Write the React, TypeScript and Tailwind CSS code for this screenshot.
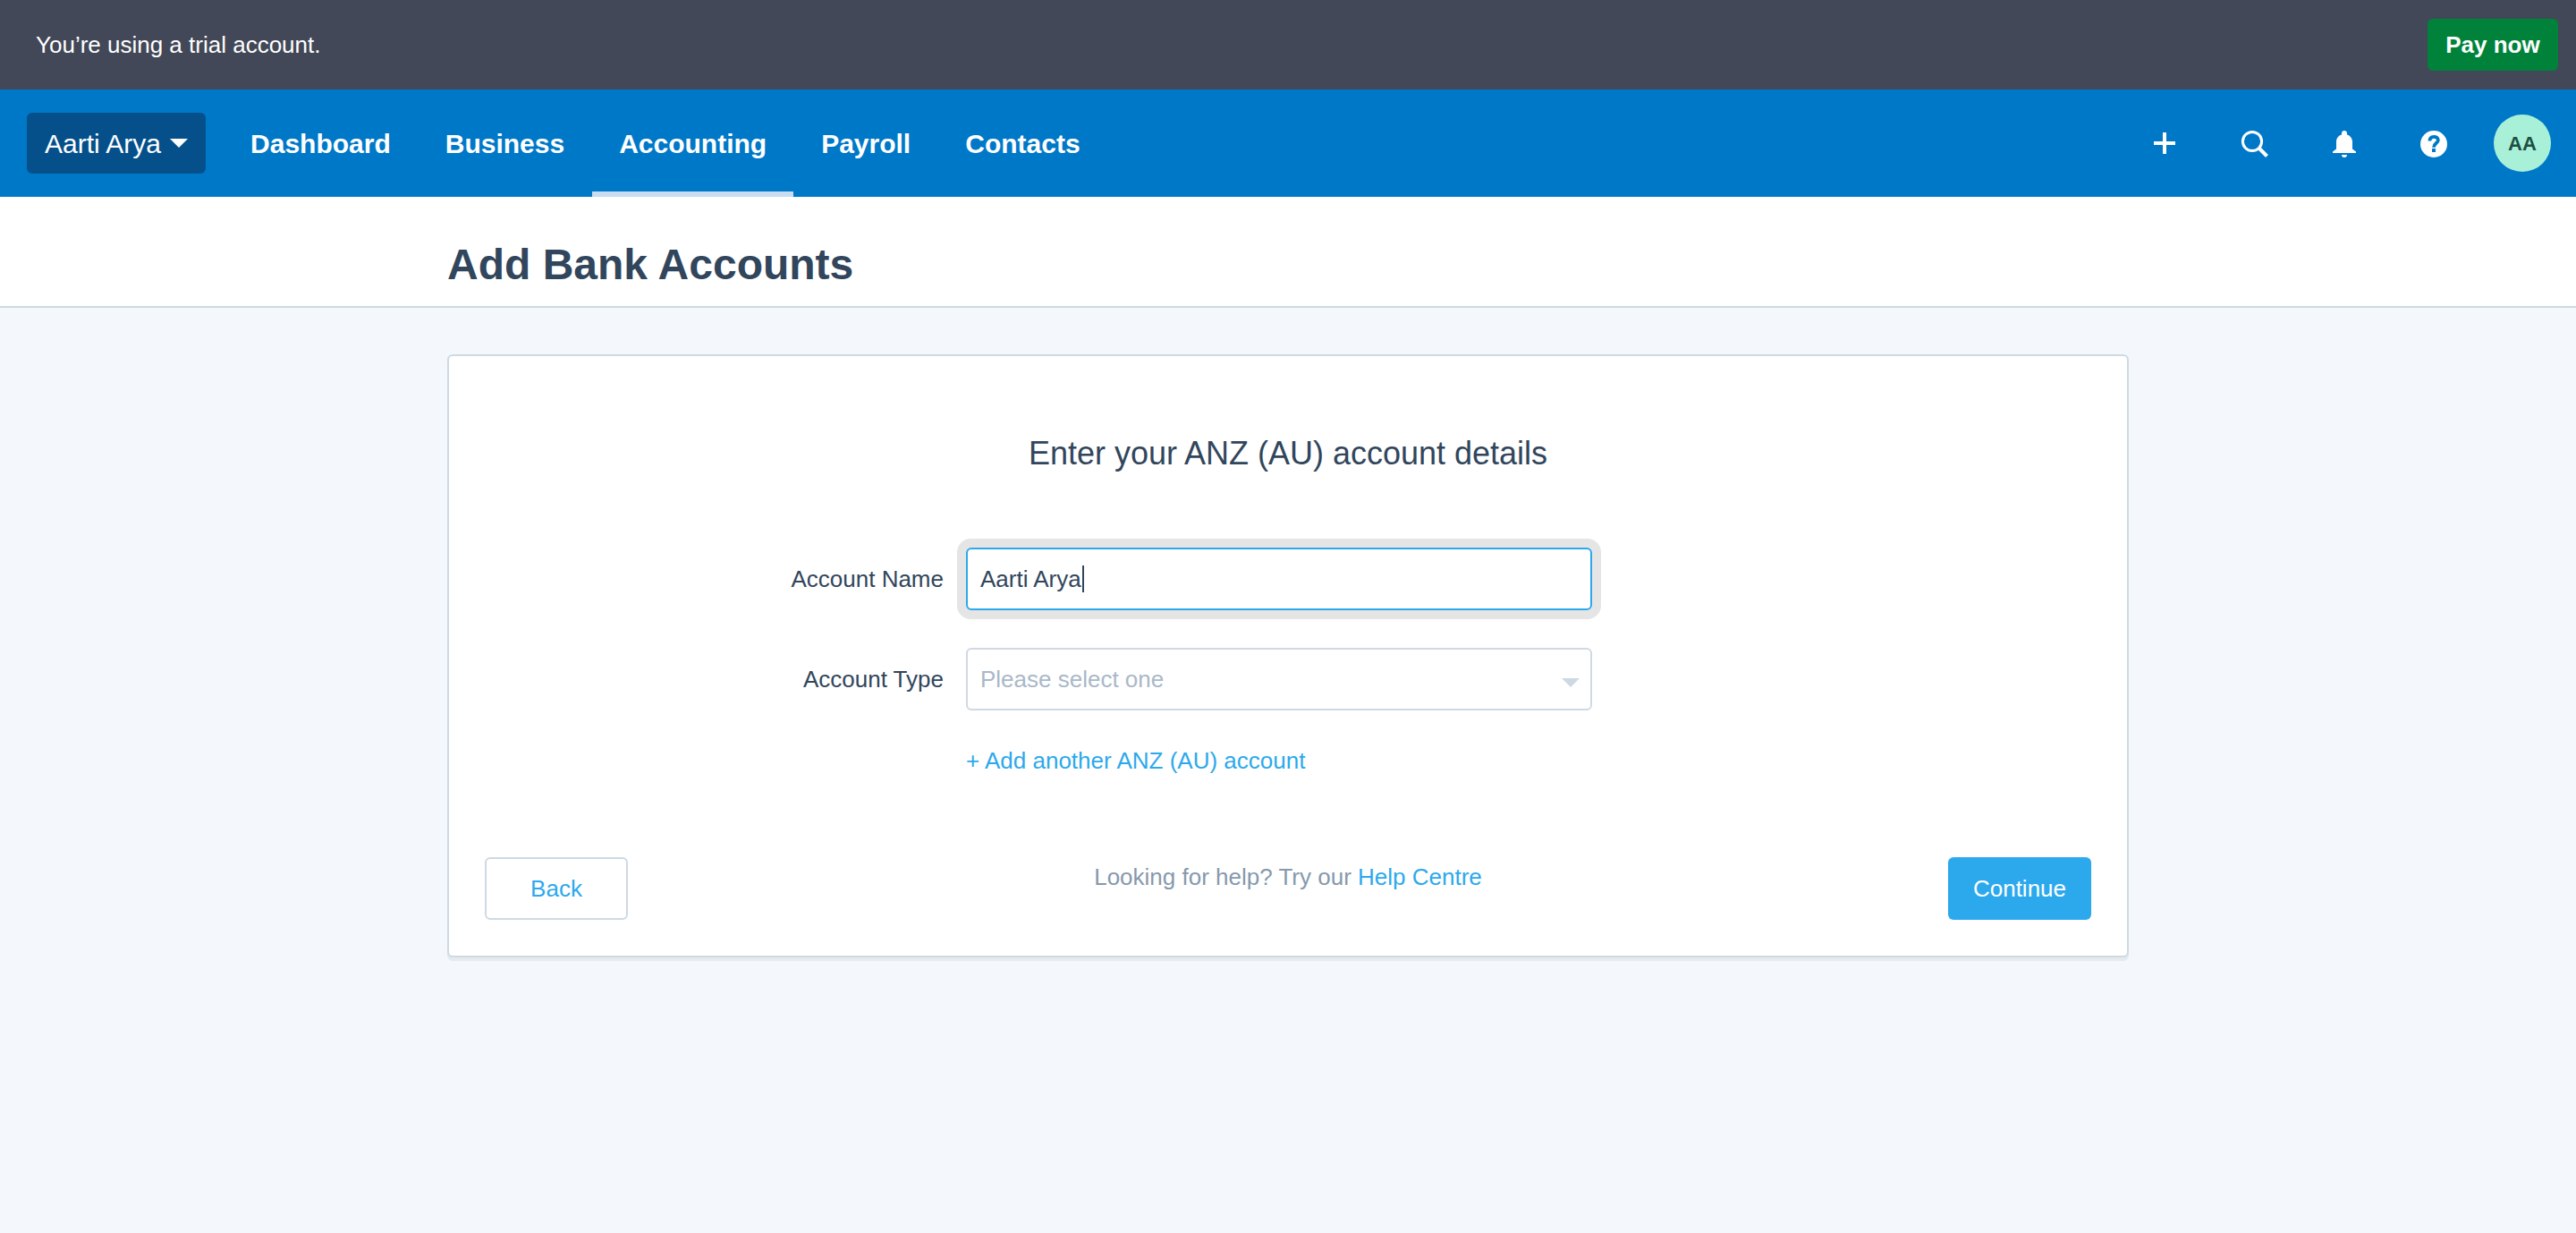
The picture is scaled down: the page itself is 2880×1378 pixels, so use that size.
import { useState } from "react";
import type { ReactNode } from "react";

const tabs = ["Dashboard", "Business", "Accounting", "Payroll", "Contacts"];

function IconButton({ label, children }: { label: string; children: ReactNode }) {
  return (
    <button type="button" aria-label={label} className="flex h-full w-25 items-center justify-center">
      <svg viewBox="0 0 40 40" className="size-10" fill="none" aria-hidden="true">
        {children}
      </svg>
    </button>
  );
}

function TrialBar() {
  return (
    <div className="flex h-25 items-center justify-between bg-[#424857] pr-5 pl-10 text-[26px] text-white">
      <p>You’re using a trial account.</p>
      <button type="button" className="h-[58px] w-[146px] rounded-md bg-[#00823b] font-bold">
        Pay now
      </button>
    </div>
  );
}

function NavBar() {
  return (
    <header className="flex h-30 items-center bg-[#0078c8] pr-2.5 pl-7.5 text-white">
      <button
        type="button"
        className="flex h-[68px] items-center gap-2.5 rounded-md bg-[#05508a] px-5 text-[30px]"
      >
        Aarti Arya
        <svg viewBox="0 0 20 10" className="h-2.5 w-5" fill="currentColor" aria-hidden="true">
          <path d="M0 0h20L10 10z" />
        </svg>
      </button>
      <nav className="ml-5 flex h-full gap-px text-[30px] font-bold">
        {tabs.map((tab) => (
          <a
            key={tab}
            href="#"
            aria-current={tab === "Accounting" ? "page" : undefined}
            className={
              tab === "Accounting"
                ? "flex items-center border-y-6 border-t-transparent border-b-[#c8dcf2] px-7.5"
                : "flex items-center px-7.5"
            }
          >
            {tab}
          </a>
        ))}
      </nav>
      <div className="ml-auto flex h-full items-center">
        <IconButton label="Add">
          <path d="M20 8v24M8 20h24" stroke="currentColor" strokeWidth="4" />
        </IconButton>
        <IconButton label="Search">
          <circle cx="18" cy="18" r="10.6" stroke="currentColor" strokeWidth="3" />
          <path d="M25.500 25.500l9 9" stroke="currentColor" strokeWidth="4" />
        </IconButton>
        <IconButton label="Notifications">
          <path
            d="M21 6c1.800 0 3 1.300 3 3v1.500c3.600 1 6 4 6 8V26.500l4 3v1.500H8v-1.500l4-3v-8c0-4 2.400-7 6-8V9c0-1.700 1.200-3 3-3zM18 33h6c0 1.700-1.300 3-3 3s-3-1.300-3-3z"
            fill="currentColor"
          />
        </IconButton>
        <IconButton label="Help">
          <circle cx="21" cy="21" r="15" fill="currentColor" />
          <path
            d="M16.500 17.500c0-3 1.800-4.700 4.600-4.700 2.700 0 4.700 1.500 4.700 3.900 0 3.300-4.800 3.600-4.800 8"
            stroke="#0078c8"
            strokeWidth="3.800"
          />
          <path d="M19 26h4v4h-4z" fill="#0078c8" />
        </IconButton>
        <button type="button" aria-label="User menu" className="flex w-25 justify-center">
          <span className="flex size-16 items-center justify-center rounded-full bg-[#a8f0d8] text-[22px] font-bold text-[#1d4f42]">
            AA
          </span>
        </button>
      </div>
    </header>
  );
}

export default function App() {
  const [name, setName] = useState("Aarti Arya");
  return (
    <div className="min-h-screen bg-[#f4f8fc] font-['Liberation_Sans',Arial,sans-serif] text-[26px] text-[#31465c]">
      <TrialBar />
      <NavBar />
      <div className="border-b-2 border-[#ccd9e4] bg-white pt-12 pb-[18px]">
        <h1 className="mx-auto max-w-[1880px] text-5xl/[56px] font-bold">Add Bank Accounts</h1>
      </div>
      <main className="mx-auto mt-13 max-w-[1880px] rounded-md border-2 border-[#ced9e3] bg-white px-10 pb-10 shadow-[0_4px_0_#e6eaed]">
        <h2 className="pt-21 text-center text-4xl/[50px]">Enter your ANZ (AU) account details</h2>
        <form className="mt-20 grid grid-cols-[513px_700px] gap-x-[25px]">
          <label htmlFor="account-name" className="self-center text-right">
            Account Name
          </label>
          <div className="relative">
            <input
              id="account-name"
              type="text"
              value={name}
              onChange={(e) => setName(e.target.value)}
              className="block h-[70px] w-full rounded-md border-2 border-[#2ca9ec] bg-white px-3.5 shadow-[0_0_0_10px_#e5e5e5] outline-none"
            />
            <span className="absolute top-5 left-[130px] h-[30px] w-0.5 bg-[#31465c]" />
          </div>
          <label htmlFor="account-type" className="mt-[42px] self-center text-right">
            Account Type
          </label>
          <div className="relative mt-[42px]">
            <select
              id="account-type"
              className="block h-[70px] w-full appearance-none rounded-md border-2 border-[#ced9e3] bg-white px-3.5 text-[#a9b8c8]"
            >
              <option>Please select one</option>
            </select>
            <svg
              viewBox="0 0 20 10"
              className="pointer-events-none absolute top-[34px] right-3.5 h-2.5 w-5"
              fill="#ccd9e4"
              aria-hidden="true"
            >
              <path d="M0 0h20L10 10z" />
            </svg>
          </div>
          <a href="#" className="col-start-2 mt-[38px] justify-self-start leading-9 text-[#2ca9ec]">
            + Add another ANZ (AU) account
          </a>
        </form>
        <footer className="mt-[90px] flex items-start justify-between">
          <button type="button" className="h-[70px] w-40 rounded-md border-2 border-[#ced9e3] bg-white text-[#2ca9ec]">
            Back
          </button>
          <p className="mt-1 leading-9 text-[#8699ad]">
            Looking for help? Try our{" "}
            <a href="#" className="text-[#2ca9ec]">
              Help Centre
            </a>
          </p>
          <button type="button" className="h-[70px] w-40 rounded-md bg-[#2ca9ec] text-white">
            Continue
          </button>
        </footer>
      </main>
    </div>
  );
}
